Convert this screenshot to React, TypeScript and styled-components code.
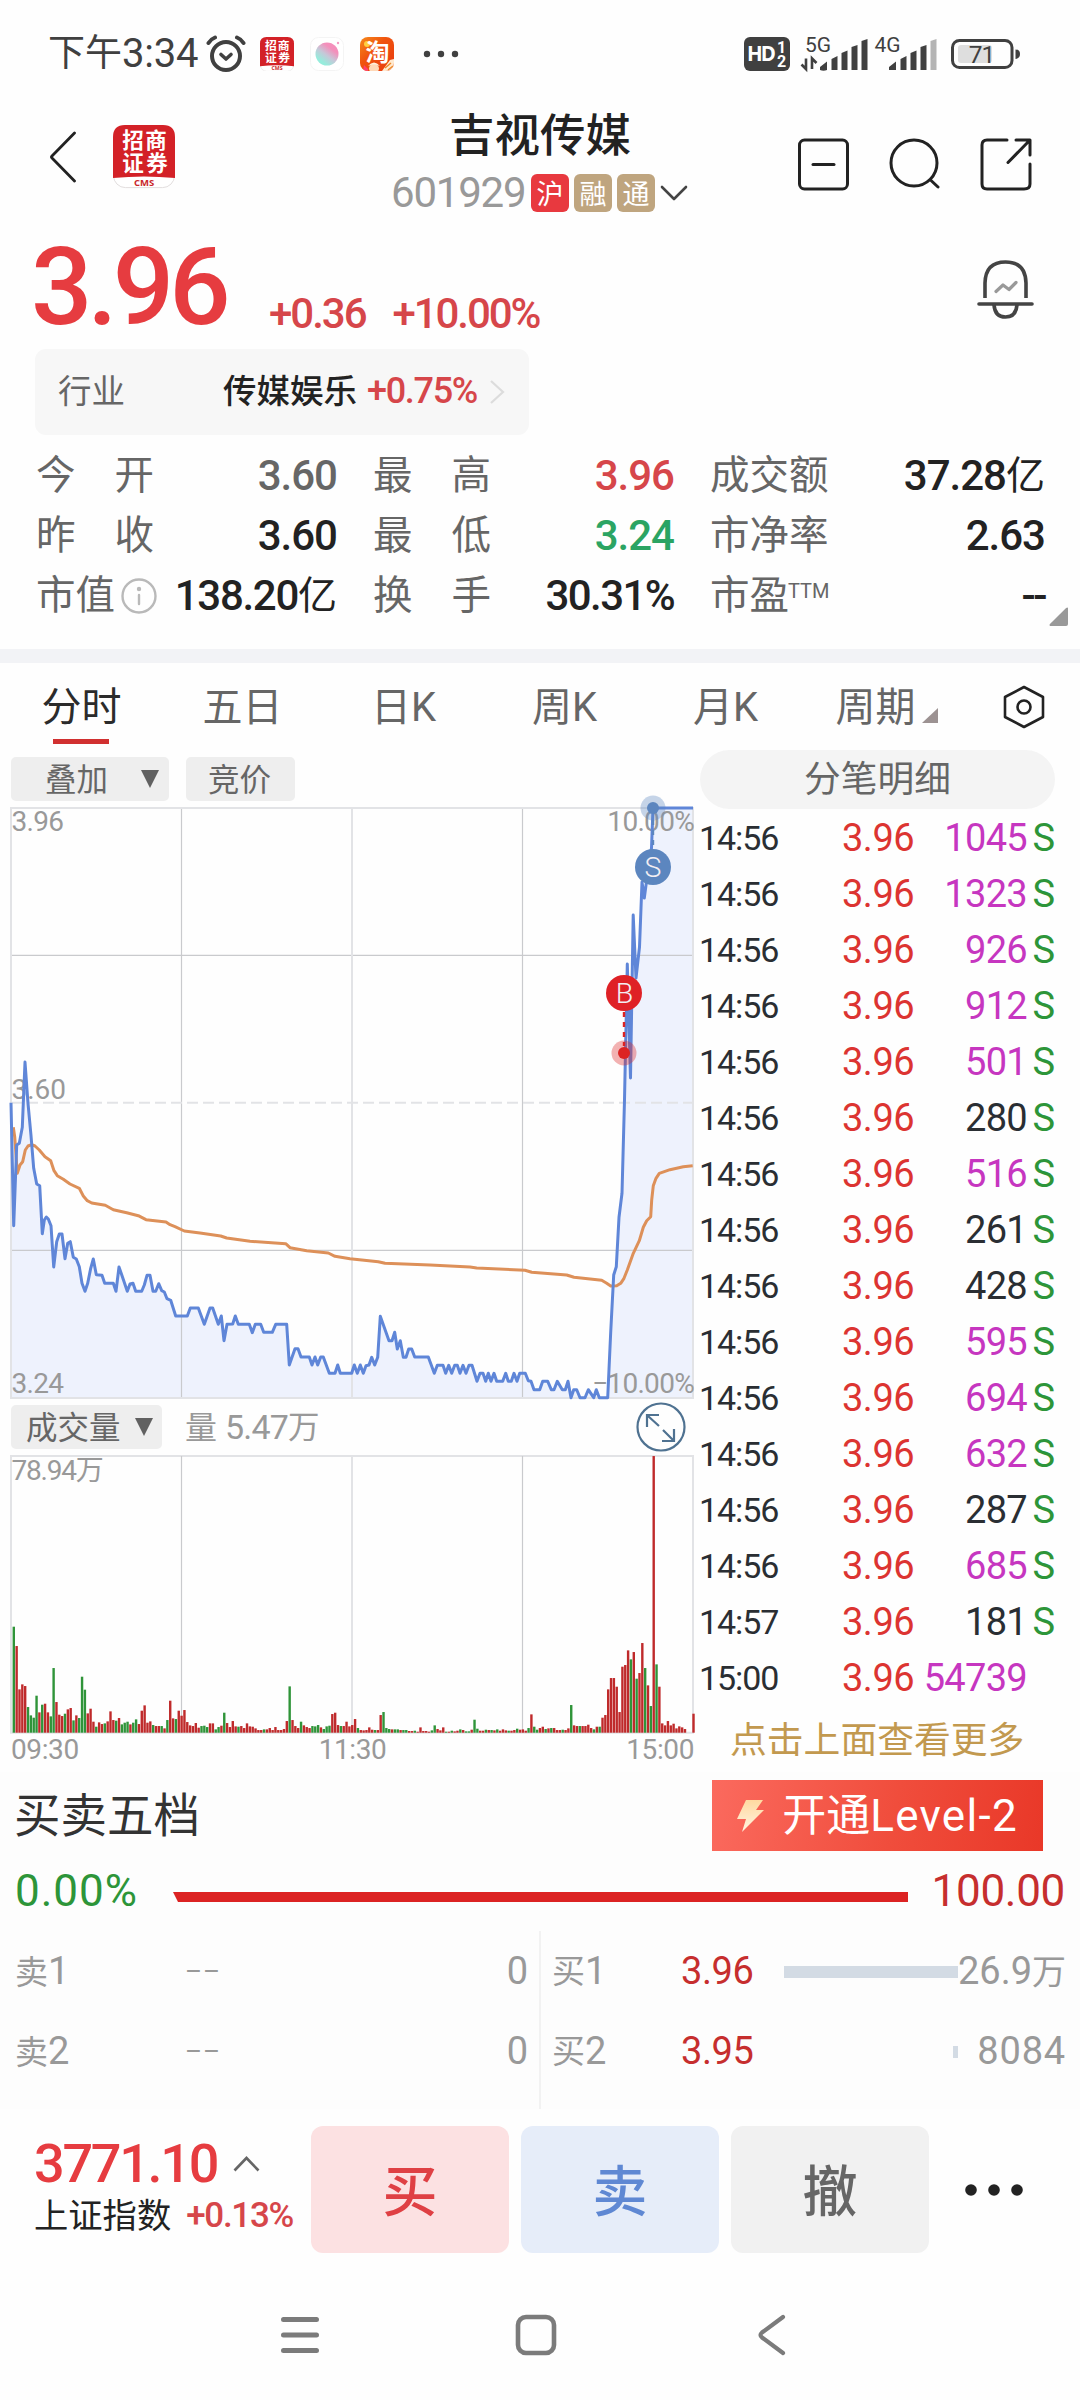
import React from "react";
import styled, { createGlobalStyle } from "styled-components";

const FONT = `Roboto, "Noto Sans CJK SC", sans-serif`;
const CJK = `"Noto Sans CJK SC", sans-serif`;

const C = {
  ink: "#222222",
  grey: "#666666",
  light: "#999999",
  red: "#e63c40",
  quoteRed: "#d6464a",
  tradeRed: "#dc3431",
  bookRed: "#c62e2e",
  green: "#2ba463",
  tradeGreen: "#2d9539",
  violet: "#c636c0",
  blue: "#5f86d2",
  gold: "#c2994f",
};

const GlobalStyle = createGlobalStyle`
  * { box-sizing: border-box; }
  html, body { margin: 0; padding: 0; background: #fefefe; }
  body { font-family: ${FONT}; color: ${C.ink}; }
  svg { display: block; flex: none; }
`;

const Screen = styled.div`
  width: 1080px;
  height: 2400px;
  overflow: hidden;
  display: flex;
  flex-direction: column;
  background: #fefefe;
  line-height: 1;
  white-space: nowrap;
`;

/* ---------- generic text ---------- */
const Num = styled.span<{ $size: number; $color?: string; $weight?: number; $ls?: number }>`
  font-size: ${(p) => p.$size}px;
  line-height: 1.2;
  color: ${(p) => p.$color ?? "inherit"};
  font-weight: ${(p) => p.$weight ?? 400};
  letter-spacing: ${(p) => p.$ls ?? 0}px;
`;
const Zh = styled(Num)`
  padding-top: 1px;
`;

/* ---------- status bar ---------- */
const StatusBar = styled.div`
  height: 108px;
  display: flex;
  align-items: center;
  justify-content: space-between;
  padding: 0 57px 0 48px;
  color: #404040;
`;
const StatusSide = styled.div`
  display: flex;
  align-items: center;
`;
const Clock = styled.div`
  display: flex;
  align-items: center;
  width: 158px;
`;
const AppIcons = styled.div`
  display: flex;
  gap: 16px;
  margin-left: 14px;
  margin-right: 29px;
`;

const BrokerLogo = ({ size }: { size: number }) => (
  <svg width={size} height={size * 1.02} viewBox="0 0 62 63">
    <rect x="0.5" y="0.5" width="61" height="62" rx="12" fill="#fff" stroke="#e2dede" />
    <path d="M0 53V12Q0 0 12 0H50Q62 0 62 12V53Q31 50 0 53Z" fill="#d32127" />
    <g fill="#fff" fontFamily={CJK} fontWeight="700" fontSize="21.5" textAnchor="middle">
      <text x="20" y="23">招</text>
      <text x="43" y="23">商</text>
      <text x="20" y="46">证</text>
      <text x="44" y="46">券</text>
    </g>
    <text x="31" y="61" fill="#c9272b" fontFamily="Open Sans, sans-serif" fontWeight="700" fontSize="9.5" textAnchor="middle">CMS</text>
  </svg>
);

const AlarmIcon = () => (
  <svg width="40" height="38" viewBox="0 0 40 38" fill="none" stroke="#404040" strokeLinecap="round">
    <circle cx="20" cy="21" r="14" strokeWidth="4" />
    <path d="M2.500 8Q5 4 9 2.500M37.500 8Q35 4 31 2.500" strokeWidth="4" />
    <path d="M15 19.500L20 24L25 19.500" strokeWidth="3.600" strokeLinejoin="round" />
  </svg>
);

const BubbleIcon = () => (
  <svg width="34" height="34" viewBox="0 0 34 34">
    <defs>
      <linearGradient id="bubble" x1="0.8" y1="0.1" x2="0.2" y2="0.9">
        <stop offset="0.2" stopColor="#f48fbb" />
        <stop offset="0.55" stopColor="#c6c8d8" />
        <stop offset="0.9" stopColor="#96ecdc" />
      </linearGradient>
    </defs>
    <rect x="0.5" y="0.5" width="33" height="33" rx="8" fill="#fff" stroke="#f4f4f4" />
    <circle cx="17" cy="17" r="11.500" fill="url(#bubble)" />
    <circle cx="28" cy="6" r="1.200" fill="#f29cc3" />
  </svg>
);

const TaoIcon = () => (
  <svg width="34" height="34" viewBox="0 0 34 34">
    <defs>
      <linearGradient id="tao" x1="0" y1="0" x2="1" y2="1">
        <stop offset="0" stopColor="#f58a1c" />
        <stop offset="0.4" stopColor="#f0540f" />
        <stop offset="1" stopColor="#e8380f" />
      </linearGradient>
      <clipPath id="taoClip"><rect width="34" height="34" rx="8" /></clipPath>
    </defs>
    <g clipPath="url(#taoClip)">
      <rect width="34" height="34" fill="url(#tao)" />
      <circle cx="7" cy="7" r="3" fill="#ffcf3e" />
      <ellipse cx="14" cy="31.500" rx="5" ry="4.500" fill="#ffd9b8" />
      <path d="M8 29Q14 22 20 29Q14 26 8 29Z" fill="#fff1dc" />
      <path d="M3 34L4 28L8 32V34Z" fill="#ff3f6e" />
      <path d="M22 34L30 23L34 22V34Z" fill="#ffe9cf" />
      <path d="M25 31L31 26M28 33L33 29" stroke="#ed8a2b" strokeWidth="1.500" />
    </g>
    <text x="17.500" y="24" fill="#fff" fontFamily={CJK} fontWeight="700" fontSize="24" textAnchor="middle">淘</text>
  </svg>
);

const StatusDots = () => (
  <svg width="36" height="8" viewBox="0 0 36 8" fill="#404040">
    <circle cx="4" cy="4" r="3.200" /><circle cx="18" cy="4" r="3.200" /><circle cx="32" cy="4" r="3.200" />
  </svg>
);

const RadioIcons = () => (
  <svg width="280" height="40" viewBox="743 34 280 40" fill="#404040" fontFamily={FONT}>
    <rect x="744" y="37" width="46" height="34" rx="6" />
    <text x="747" y="61" fill="#fff" fontFamily="Open Sans, sans-serif" fontWeight="700" fontSize="20.500" textLength="29">HD</text>
    <text x="777" y="52.500" fill="#fff" fontWeight="700" fontSize="16">1</text>
    <text x="777" y="67" fill="#fff" fontWeight="700" fontSize="16">2</text>
    <text x="805" y="52" fontSize="21" textLength="26">5G</text>
    <path d="M806 58.500V69L801.500 64.500M812 69V58.500L816.500 63" stroke="#404040" strokeWidth="2.600" fill="none" />
    <path d="M820 70V67L827 61.500V70Q823.500 71.500 820 70ZM831.500 70V59L837.500 56V70ZM841.500 70V53L847.500 50.500V70ZM851.500 70V47L857.500 45V70ZM861.500 70V41L867.500 39V70Z" />
    <text x="874.500" y="52" fontSize="21" textLength="26">4G</text>
    <path d="M889 70V67L896 61.500V70ZM900.500 70V59L906.500 56V70ZM910.500 70V53L916.500 50.500V70ZM920.500 70V47L926.500 45V70Z" />
    <path d="M930.500 70V41L936.500 39V70Z" fill="#b4b4b4" />
    <rect x="952.500" y="40.500" width="59.500" height="27" rx="7" fill="none" stroke="#404040" strokeWidth="3" />
    <rect x="958" y="45" width="34" height="18" rx="3" fill="#dedede" />
    <path d="M1015.500 49.500Q1020 49.500 1020 54T1015.500 59Z" />
    <text x="981.500" y="63" fontSize="24.500" textAnchor="middle" letterSpacing="-1">71</text>
  </svg>
);

/* ---------- title bar ---------- */
const TitleBar = styled.header`
  height: 112px;
  display: grid;
  grid-template-columns: 1fr auto 1fr;
`;
const TitleLeft = styled.div`
  display: flex;
  align-items: center;
  gap: 37px;
  height: 98px;
  padding-left: 49px;
`;
const TitleCenter = styled.div`
  display: flex;
  flex-direction: column;
  align-items: center;
`;
const StockName = styled.h1`
  margin: 0;
  height: 56px;
  line-height: 58px;
  font-size: 45.5px;
  font-weight: 500;
  color: ${C.ink};
`;
const CodeRow = styled.div`
  height: 58px;
  width: 298px;
  display: flex;
  align-items: center;
`;
const Code = styled.span`
  width: 140px;
  font-size: 42px;
  line-height: 1.2;
  letter-spacing: -1.2px;
  color: ${C.light};
`;
const MarketTag = styled.span<{ $bg: string }>`
  width: 38px;
  height: 38px;
  margin-right: 5px;
  border-radius: 6px;
  background: ${(p) => p.$bg};
  color: #fff;
  font: 400 27px/37px ${CJK};
  text-align: center;
`;
const TitleRight = styled.div`
  display: flex;
  align-items: center;
  justify-content: flex-end;
  gap: 40px;
  height: 112px;
  padding-right: 48px;
`;

/* ---------- quote ---------- */
const QuoteRow = styled.section`
  height: 129px;
  display: flex;
  align-items: flex-start;
  padding: 0 45px 0 31px;
`;
const Price = styled.div`
  width: 238px;
  height: 129px;
  font-size: 108px;
  line-height: 134px;
  font-weight: 500;
  letter-spacing: -4.8px;
  color: ${C.red};
`;
const Changes = styled.div`
  flex: 1;
  display: flex;
  gap: 27px;
  padding-top: 69px;
`;
const BellSlot = styled.div`
  padding-top: 38px;
`;

const Industry = styled.section`
  width: 494px;
  height: 86px;
  margin-left: 35px;
  padding: 0 23px;
  display: flex;
  align-items: center;
  border-radius: 11px;
  background: #f7f7f7;
`;
const IndustryName = styled.span`
  width: 140px;
  margin-left: 98px;
  margin-right: 10px;
  padding-top: 1px;
  font-size: 33.5px;
  font-weight: 500;
  line-height: 1.2;
`;

const Stats = styled.section`
  position: relative;
  height: 214px;
  padding: 11px 35px 0 36px;
  display: grid;
  grid-template-columns: 301px 301px 335px;
  grid-auto-rows: 60px;
  column-gap: 36px;
`;
const Stat = styled.div`
  display: flex;
  align-items: center;
  justify-content: space-between;
`;
const StatLabel = styled.div`
  min-width: 118px;
  height: 44px;
  display: flex;
  align-items: center;
  justify-content: space-between;
  color: ${C.grey};
  font-size: 39.5px;
`;
const StatValue = styled.span<{ $color?: string; $ls?: number }>`
  display: flex;
  align-items: center;
  font-size: 42px;
  font-weight: 500;
  letter-spacing: ${(p) => p.$ls ?? -1}px;
  color: ${(p) => p.$color ?? C.ink};
`;
const Unit = styled.span`
  font-size: 39px;
  font-weight: 400;
  letter-spacing: 0;
`;
const Super = styled.sup`
  align-self: flex-start;
  margin: 7px 0 0 -1px;
  font-size: 20px;
  line-height: 1;
`;
const StatsCorner = styled.div`
  position: absolute;
  right: 12px;
  top: 172px;
`;

const Band = styled.div`
  height: 14px;
  background: #f2f3f6;
`;

/* ---------- tabs ---------- */
const Tabs = styled.nav`
  height: 87px;
  padding-left: 1px;
  display: flex;
`;
const Tab = styled.div<{ $active?: boolean }>`
  position: relative;
  width: 161px;
  height: 87px;
  padding-top: 3px;
  display: flex;
  align-items: center;
  justify-content: center;
  font-size: 40px;
  color: ${(p) => (p.$active ? "#2b2b2b" : C.grey)};
  &::after {
    content: "";
    display: ${(p) => (p.$active ? "block" : "none")};
    position: absolute;
    left: 52px;
    bottom: 6px;
    width: 56px;
    height: 5px;
    background: #d13030;
  }
`;
const HexSlot = styled.div`
  flex: 1;
  display: flex;
  align-items: center;
  justify-content: center;
`;

/* ---------- chart and ticks ---------- */
const Body = styled.main`
  height: 1022px;
  display: grid;
  grid-template-columns: 700px 380px;
`;
const ChartColumn = styled.div`
  display: flex;
  flex-direction: column;
`;
const ChartTools = styled.div`
  height: 51px;
  padding: 7px 0 0 11px;
  display: flex;
  gap: 17px;
`;
const VolumeTools = styled.div`
  height: 52px;
  padding: 0 14px 0 11px;
  display: flex;
  align-items: center;
`;
const Chip = styled.div<{ $w: number; $pad: string }>`
  width: ${(p) => p.$w}px;
  height: 44px;
  padding: ${(p) => p.$pad};
  display: flex;
  align-items: center;
  justify-content: space-between;
  border-radius: 5px;
  background: #eeeeee;
  color: ${C.grey};
  font-size: 31.5px;
`;
const ChipText = styled.span`
  padding-top: 3px;
  line-height: 1.2;
`;
const VolumeText = styled.div`
  flex: 1;
  margin-left: 23px;
  padding-top: 1px;
  display: flex;
  align-items: center;
  color: ${C.light};
`;
const Axis = styled.div`
  height: 25px;
  width: 683px;
  margin-left: 11px;
  display: flex;
  align-items: center;
  justify-content: space-between;
  font-size: 28px;
  letter-spacing: -0.4px;
  color: ${C.light};
`;

const TickColumn = styled.aside`
  display: flex;
  flex-direction: column;
`;
const TickTitle = styled.div`
  width: 355px;
  height: 59px;
  margin-bottom: 1px;
  border-radius: 30px;
  background: #f4f4f4;
  color: ${C.grey};
  font-size: 36.7px;
  line-height: 60px;
  text-align: center;
`;
const Tick = styled.div`
  height: 56px;
  width: 355px;
  display: grid;
  grid-template-columns: 142px 72px 113px 28px;
  align-items: center;
`;
const TickTime = styled.span`
  margin-left: -1px;
  font-size: 34px;
  letter-spacing: -1.1px;
  color: #2a2e33;
`;
const TickPrice = styled.span`
  font-size: 38px;
  letter-spacing: -0.5px;
  color: ${C.tradeRed};
`;
const TickVolume = styled.span<{ $big: boolean }>`
  font-size: 38px;
  letter-spacing: -0.7px;
  text-align: right;
  justify-self: end;
  color: ${(p) => (p.$big ? C.violet : "#2a2e33")};
`;
const TickSide = styled.span`
  font-size: 38px;
  text-align: right;
  color: ${C.tradeGreen};
`;
const More = styled.div`
  height: 66px;
  padding-left: 30px;
  font-size: 36.8px;
  line-height: 69px;
  color: ${C.gold};
`;

/* ---------- order book ---------- */
const Book = styled.section`
  height: 337px;
  padding-top: 8px;
  background: #fdfdfd;
`;
const BookHead = styled.div`
  height: 71px;
  padding: 0 37px 0 14px;
  display: flex;
  align-items: center;
  justify-content: space-between;
`;
const BookTitle = styled.h2`
  margin: 0;
  padding-top: 3px;
  font-size: 46.5px;
  font-weight: 400;
  line-height: 1.2;
  color: #333;
`;
const LevelButton = styled.div`
  width: 331px;
  height: 71px;
  padding: 0 25px;
  display: flex;
  align-items: center;
  justify-content: space-between;
  background: linear-gradient(100deg, #fb6a5e, #f04d3c 55%, #e93828);
  color: #fff;
`;
const LevelText = styled.span`
  padding-top: 2px;
  font-size: 44px;
  line-height: 1.2;
`;
const LevelLatin = styled.span`
  letter-spacing: 1.3px;
`;
const Ratio = styled.div`
  height: 80px;
  padding: 0 15px 0 15px;
  display: grid;
  grid-template-columns: 158px 735px 1fr;
  align-items: center;
`;
const RatioBar = styled.div`
  height: 10px;
  margin-top: 12px;
  background: #dc2323;
  clip-path: polygon(0 0, 100% 0, 100% 100%, 5px 100%);
`;
const RatioEnd = styled.div`
  text-align: right;
`;
const BookSides = styled.div`
  height: 178px;
  display: grid;
  grid-template-columns: 539px 541px;
`;
const BookSide = styled.div<{ $ruled?: boolean }>`
  border-left: ${(p) => (p.$ruled ? "2px solid #f2f2f2" : "none")};
`;
const SellRow = styled.div`
  height: 80px;
  padding: 2px 11px 0 15px;
  display: grid;
  grid-template-columns: 170px 1fr auto;
  align-items: center;
  color: ${C.light};
`;
const BuyRow = styled.div`
  height: 80px;
  padding: 1px 14px 0 11px;
  display: grid;
  grid-template-columns: 129px 103px 174px 1fr;
  align-items: center;
  color: ${C.light};
`;
const DepthBar = styled.div<{ $w: number }>`
  justify-self: end;
  width: ${(p) => p.$w}px;
  height: 12px;
  background: #d3dbe4;
`;
const BuyVolume = styled.div`
  justify-self: end;
  display: flex;
  align-items: center;
`;
const Label = styled.span`
  display: flex;
  align-items: center;
`;

/* ---------- bottom ---------- */
const TradeBar = styled.footer`
  height: 144px;
  padding: 17px 0 0 34px;
  display: flex;
`;
const IndexBlock = styled.div`
  width: 277px;
  display: flex;
  flex-direction: column;
`;
const IndexTop = styled.div`
  height: 74px;
  padding-top: 2px;
  display: flex;
  align-items: center;
  gap: 16px;
`;
const IndexBottom = styled.div`
  height: 32px;
  display: flex;
  align-items: center;
  gap: 15px;
`;
const TradeButton = styled.div<{ $bg: string; $color: string }>`
  width: 198px;
  height: 127px;
  margin-right: 12px;
  border-radius: 12px;
  background: ${(p) => p.$bg};
  color: ${(p) => p.$color};
  font-size: 55px;
  font-weight: 500;
  line-height: 133px;
  text-align: center;
`;
const DotsSlot = styled.div`
  padding: 57px 0 0 23px;
`;
const SystemNav = styled.div`
  height: 147px;
  padding: 61px 0 0 280px;
  display: flex;
  gap: 195px;
`;

/* ---------- data ---------- */
type P = [number, number];
const scaled = (pts: P[], ox: number, oy: number): P[] => pts.map(([x, y]) => [ox + x / 3, oy + y / 3]);

const PRICE: P[] = [
  ...scaled(
    [[33,188],[41,557],[50,315],[58,310],[67,262],[75,66],[84,190],[93,287],[101,385],[110,432],[119,437],[127,581],[133,540],[139,531],[145,537],[153,557],[161,681],[170,605],[178,582],[186,582],[195,656],[203,610],[211,605],[220,652],[229,657],[238,680],[246,730],[255,754],[263,730],[272,685],[280,657],[289,704],[306,706],[314,730],[340,730],[348,754],[357,681],[365,704],[382,754],[390,732],[399,730],[407,754],[425,754],[433,735],[441,706],[450,706],[459,754],[467,754],[476,731],[485,752],[493,756],[501,776],[512,781],[527,828],[562,828],[571,804],[595,804],[613,853],[630,804],[638,804],[655,853],[664,828],[672,902],[681,853],[698,852],[706,828],[715,853],[748,853],[757,878],[766,853],[782,853],[791,877],[817,877],[827,853],[860,853],[868,975],[885,926],[894,926],[903,951],[928,951],[936,975],[945,951],[953,975],[962,951],[970,951],[988,1000],[1005,1000],[1013,975],[1021,1000],[1055,1000]],
    0, 1040),
  ...scaled(
    [[13,675],[22,700],[31,675],[40,700],[48,677],[57,675],[65,652],[74,675],[83,652],[91,529],[117,602],[126,602],[134,577],[142,627],[151,602],[160,652],[168,652],[176,627],[185,627],[194,651],[235,651],[253,700],[262,676],[279,676],[287,700],[296,676],[305,700],[314,676],[322,676],[330,700],[339,676],[348,700],[357,676],[366,676],[381,724],[390,700],[399,700],[407,724],[415,700],[423,724],[432,700],[440,724],[458,724],[467,700],[475,724],[484,724],[492,700],[501,724],[509,700],[526,700],[535,722],[543,724],[552,749],[569,749],[578,724],[593,724],[604,749],[612,749],[622,724],[637,749],[646,749],[654,724],[663,773],[671,749],[680,749],[690,773],[705,773],[715,749],[731,773],[739,749],[748,773],[773,773],[782,577],[791,405],[799,380],[807,232],[816,160]],
    350, 1140),
  [624.5, 1100], [627.3, 964], [630.5, 1078], [633.2, 915], [636, 978], [639.5, 947], [642, 882], [644.3, 898], [648, 870], [651.5, 848], [653, 808], [693, 808],
];

const AVERAGE: P[] = [
  ...scaled(
    [[40,262],[44,290],[52,400],[60,375],[68,365],[76,330],[84,318],[95,314],[105,318],[118,330],[135,350],[152,362],[162,392],[172,407],[190,418],[210,432],[238,445],[250,468],[262,482],[275,489],[316,496],[340,509],[380,518],[415,527],[438,539],[498,546],[510,554],[525,560],[553,573],[600,579],[662,588],[680,594],[750,604],[857,611],[870,623],[920,632],[985,639],[1005,649]],
    0, 1040),
  ...scaled(
    [[0,356],[85,365],[105,370],[240,375],[360,381],[380,384],[525,391],[545,397],[650,405],[672,412],[755,421],[770,430],[782,438],[800,437],[812,430],[822,415],[832,390],[850,340],[868,302],[880,262],[890,242],[902,230],[905,180],[910,137],[918,115],[928,100],[960,89],[1000,80],[1028,77]],
    350, 1140),
];

const toPath = (pts: P[]) => pts.map(([x, y], i) => `${i ? "L" : "M"}${x.toFixed(1)} ${y.toFixed(1)}`).join("");

const VOLUME = (
  "g318 r260 r130 r145 r140 g77 g52 g45 g111 r61 g84 r87 r61 g49 g194 r92 r54 r50 g57 r70 r74 g37 r52 g44 g168 g129 r58 r72 r33 g18 " +
  "r31 r26 g28 r34 r64 r38 g36 r44 g25 g30 g33 r25 g30 g40 r26 r66 r82 r30 r34 g23 r20 r20 g20 r13 g38 r96 r43 g41 r66 r51 " +
  "r68 r32 r22 r20 r29 r15 g20 g21 g17 r28 r28 g10 g17 r21 g60 r29 r17 r35 r19 g18 r20 r14 r28 r19 r18 r13 r8 r8 g10 r10 " +
  "r14 r8 r17 r8 r8 r11 r35 g139 r38 r20 r14 g33 r22 r17 r14 g20 g19 g23 r16 g11 g19 g21 r56 r60 r23 g20 r20 r33 r19 r23 " +
  "r41 g14 r8 r7 r8 r16 r9 g8 r8 r53 g62 g14 g11 r10 g10 g10 r8 g8 g8 r5 r5 g6 r3 r16 r5 r5 r3 g7 g22 r11 " +
  "r7 r16 g3 r3 g6 r4 r6 g10 r8 g4 g4 r9 g39 g12 r6 r6 g9 r8 g8 r7 g10 r6 r10 r7 g6 r6 r8 g12 r9 r10 " +
  "r6 g14 r55 g18 g9 r14 r18 g11 r13 g14 r14 r8 r8 g9 r8 r13 g83 r22 r20 g20 r20 r20 r24 r14 g10 r18 g18 r45 r53 r130 " +
  "r164 r164 r138 r62 r198 r203 r247 g220 r242 g162 r179 r269 g194 r142 g80 r830 g205 r138 r28 r22 r35 r22 r27 r13 r19 r16 r11 r0 r0 r57"
).split(" ");

const TICKS: [string, string, string, boolean][] = [
  ["14:56", "1045", "S", true], ["14:56", "1323", "S", true], ["14:56", "926", "S", true], ["14:56", "912", "S", true],
  ["14:56", "501", "S", true], ["14:56", "280", "S", false], ["14:56", "516", "S", true], ["14:56", "261", "S", false],
  ["14:56", "428", "S", false], ["14:56", "595", "S", true], ["14:56", "694", "S", true], ["14:56", "632", "S", true],
  ["14:56", "287", "S", false], ["14:56", "685", "S", true], ["14:57", "181", "S", false], ["15:00", "54739", "", true],
];

/* ---------- charts ---------- */
const PriceChart = () => {
  const line = toPath(PRICE);
  return (
    <svg width="700" height="600" viewBox="0 801 700 600" overflow="visible" fontFamily={FONT} fontSize="28">
      <path d={`${line}V1398H11Z`} fill="#eef2fd" />
      <g fill="none" strokeWidth="1.200" stroke="#c9cacd">
        <path d="M11 955.300H693M11 1250.300H693M181.500 808V1398M522.500 808V1398" />
      </g>
      <g fill="none" strokeWidth="2" stroke="#e2e3e6">
        <rect x="11" y="808" width="682" height="590" />
        <path d="M352 808V1398" />
        <path d="M11 1102.700H693" strokeDasharray="11 5" />
      </g>
      <g fill={C.light} letterSpacing="-0.7">
        <text x="11.500" y="831">3.96</text>
        <text x="694" y="831" textAnchor="end">10.00%</text>
        <text x="11.500" y="1099" letterSpacing="0">3.60</text>
        <text x="11.500" y="1393">3.24</text>
        <text x="694" y="1393" textAnchor="end">−10.00%</text>
      </g>
      <path d={toPath(AVERAGE)} fill="none" stroke="#dd9059" strokeWidth="3" strokeLinejoin="round" />
      <path d={line} fill="none" stroke="#5f86d8" strokeWidth="3" strokeLinejoin="round" />
      <path d="M624 1012V1046" stroke="#dc2323" strokeWidth="2.400" strokeDasharray="5 5" />
      <circle cx="624" cy="1053" r="12.500" fill="#dc2323" opacity="0.35" />
      <circle cx="624" cy="1053" r="6" fill="#dc2323" />
      <circle cx="624" cy="993" r="18" fill="#df2126" />
      <path d="M653 820V850" stroke="#5c86bf" strokeWidth="2.400" strokeDasharray="5 5" />
      <circle cx="653" cy="808" r="12.500" fill="#5c86bf" opacity="0.35" />
      <circle cx="653" cy="808" r="6" fill="#5c86bf" />
      <circle cx="653" cy="867" r="18" fill="#5c86bf" />
      <g fill="#f3eef2" fontSize="28.500" fontWeight="300" textAnchor="middle">
        <text x="624.500" y="1003">B</text>
        <text x="653" y="877">S</text>
      </g>
    </svg>
  );
};

const VolumeChart = () => (
  <svg width="700" height="284" viewBox="0 1453 700 284" fontFamily={FONT} fontSize="28">
    <g fill="none" stroke="#e2e3e6" strokeWidth="2">
      <rect x="11" y="1456" width="682" height="276.700" />
      <path d="M352 1456V1733" />
      <path d="M181.500 1456V1733M522.500 1456V1733" stroke="#c9cacd" strokeWidth="1.200" />
    </g>
    <text x="11.500" y="1479.500" fill={C.light} letterSpacing="-1.200">78.94万</text>
    {VOLUME.map((v, i) => {
      const h = Number(v.slice(1)) / 3;
      return <rect key={i} x={12.6 + i * 2.844} y={1732.7 - h} width="2.400" height={h} fill={v[0] === "r" ? "#bf2a2b" : "#2f9439"} />;
    })}
  </svg>
);

/* ---------- small icons ---------- */
const Down = () => (
  <svg width="18" height="18" viewBox="0 0 18 18"><path d="M0 0H18L9 18Z" fill="#616161" /></svg>
);
const Corner = ({ size, color }: { size: number; color: string }) => (
  <svg width={size} height={size} viewBox="0 0 20 20"><path d="M20 1V18Q20 20 18 20H1Q0 19 1 18L18 1Q20 0 20 1Z" fill={color} /></svg>
);

export default function App() {
  return (
    <Screen>
      <GlobalStyle />
      <StatusBar>
        <StatusSide>
          <Clock>
            <Zh $size={37}>下午</Zh>
            <Num $size={40} $ls={-0.2}>3:34</Num>
          </Clock>
          <AlarmIcon />
          <AppIcons>
            <BrokerLogo size={34} />
            <BubbleIcon />
            <TaoIcon />
          </AppIcons>
          <StatusDots />
        </StatusSide>
        <RadioIcons />
      </StatusBar>

      <TitleBar>
        <TitleLeft>
          <svg width="27" height="52" viewBox="0 0 27 52" fill="none" stroke={C.ink} strokeWidth="2.800" strokeLinecap="round" strokeLinejoin="round">
            <path d="M25.500 2L3 25Q2 26 3 27L25.500 50" />
          </svg>
          <BrokerLogo size={62} />
        </TitleLeft>
        <TitleCenter>
          <StockName>吉视传媒</StockName>
          <CodeRow>
            <Code>601929</Code>
            <MarketTag $bg="#e8393f">沪</MarketTag>
            <MarketTag $bg="#bfa57f">融</MarketTag>
            <MarketTag $bg="#bfa57f">通</MarketTag>
            <svg width="28" height="16" viewBox="0 0 28 16" fill="none" stroke="#444" strokeWidth="2.600" strokeLinecap="round" strokeLinejoin="round">
              <path d="M2 2L14 14L26 2" />
            </svg>
          </CodeRow>
        </TitleCenter>
        <TitleRight>
          <svg width="51" height="53" viewBox="0 0 51 53" fill="none" stroke={C.ink} strokeWidth="3" strokeLinecap="round">
            <rect x="1.500" y="2" width="48" height="49" rx="5" />
            <path d="M15 26.500H36" />
          </svg>
          <svg width="51" height="53" viewBox="0 0 51 53" fill="none" stroke={C.ink} strokeWidth="3" strokeLinecap="round">
            <circle cx="25" cy="25" r="23" />
            <path d="M41.500 42L49 49" />
          </svg>
          <svg width="52" height="53" viewBox="0 0 52 53" fill="none" stroke={C.ink} strokeWidth="3" strokeLinecap="round" strokeLinejoin="round">
            <path d="M27 2H7Q2 2 2 7V46Q2 51 7 51H44Q50 51 50 46V26M36 2H50V17M49 3L28 24.500" />
          </svg>
        </TitleRight>
      </TitleBar>

      <QuoteRow>
        <Price>3.96</Price>
        <Changes>
          <Num $size={42} $color={C.quoteRed} $weight={500} $ls={-2}>+0.36</Num>
          <Num $size={42} $color={C.quoteRed} $weight={500} $ls={-2.1}>+10.00%</Num>
        </Changes>
        <BellSlot>
          <svg width="60" height="62" viewBox="0 0 60 62" fill="none" stroke="#444" strokeWidth="3.600" strokeLinecap="round">
            <path d="M10 40V25Q10.500 4 30.500 4Q50.500 4 51 25V40" strokeLinecap="butt" />
            <path d="M4 46H57" />
            <path d="M19 47Q20 59 30.500 59T42 47" />
            <path d="M21 33.500L28 27L34 31.500L41 24.500" stroke="#999" strokeWidth="3.200" strokeLinejoin="round" />
          </svg>
        </BellSlot>
      </QuoteRow>

      <Industry>
        <Zh $size={33.5} $color={C.grey}>行业</Zh>
        <IndustryName>传媒娱乐</IndustryName>
        <Num $size={36} $color={C.quoteRed} $weight={500} $ls={-1.3}>+0.75%</Num>
        <svg width="34" height="24" viewBox="0 0 34 24" fill="none" stroke="#dcdcdc" strokeWidth="2.200">
          <path d="M14 1L26 12L14 23" />
        </svg>
      </Industry>

      <Stats>
        <Stat><StatLabel><span>今</span><span>开</span></StatLabel><StatValue $color={C.grey}>3.60</StatValue></Stat>
        <Stat><StatLabel><span>最</span><span>高</span></StatLabel><StatValue $color={C.quoteRed}>3.96</StatValue></Stat>
        <Stat><StatLabel>成交额</StatLabel><StatValue>37.28<Unit>亿</Unit></StatValue></Stat>
        <Stat><StatLabel><span>昨</span><span>收</span></StatLabel><StatValue>3.60</StatValue></Stat>
        <Stat><StatLabel><span>最</span><span>低</span></StatLabel><StatValue $color={C.green}>3.24</StatValue></Stat>
        <Stat><StatLabel>市净率</StatLabel><StatValue>2.63</StatValue></Stat>
        <Stat>
          <StatLabel>
            <span>市值</span>
            <svg width="43" height="38" viewBox="-6 0 43 38" fill="none" stroke="#b9b9b9" strokeWidth="2.400" strokeLinecap="round">
              <circle cx="18" cy="19" r="16.500" />
              <path d="M18 18V27" />
              <circle cx="18" cy="12" r="1" fill="#b9b9b9" />
            </svg>
          </StatLabel>
          <StatValue $ls={-1.3}>138.20<Unit>亿</Unit></StatValue>
        </Stat>
        <Stat><StatLabel><span>换</span><span>手</span></StatLabel><StatValue $ls={-1.6}>30.31%</StatValue></Stat>
        <Stat><StatLabel><span>市盈</span><Super>TTM</Super></StatLabel><StatValue $ls={-2.5}>--</StatValue></Stat>
        <StatsCorner><Corner size={19} color="#999" /></StatsCorner>
      </Stats>

      <Band />

      <Tabs>
        <Tab $active>分时</Tab>
        <Tab>五日</Tab>
        <Tab>日K</Tab>
        <Tab>周K</Tab>
        <Tab>月K</Tab>
        <Tab>
          周期
          <svg width="22" height="36" viewBox="0 0 22 36"><path d="M22 18V33H6Z" fill="#9c9292" /></svg>
        </Tab>
        <HexSlot>
          <svg width="42" height="44" viewBox="0 0 42 44" fill="none" stroke={C.ink} strokeWidth="2.600" strokeLinejoin="round">
            <path d="M21 2L40 12V32L21 42L2 32V12Z" />
            <circle cx="21" cy="22" r="6.500" />
          </svg>
        </HexSlot>
      </Tabs>

      <Body>
        <ChartColumn>
          <ChartTools>
            <Chip $w={158} $pad="0 10px 0 34px"><ChipText>叠加</ChipText><Down /></Chip>
            <Chip $w={109} $pad="0 22px"><ChipText>竞价</ChipText></Chip>
          </ChartTools>
          <PriceChart />
          <VolumeTools>
            <Chip $w={151} $pad="0 9px 0 15px"><ChipText>成交量</ChipText><Down /></Chip>
            <VolumeText>
              <Zh $size={32}>量&nbsp;</Zh>
              <Num $size={34} $ls={-0.8}>5.47</Num>
              <Zh $size={31.5}>万</Zh>
            </VolumeText>
            <svg width="50" height="50" viewBox="0 0 50 50" fill="none" stroke="#4f7291" strokeWidth="2.200">
              <circle cx="25" cy="25" r="23.500" />
              <path d="M11 25V13H23M12 14L23 24M38 27V39H26M37 38L27 28" />
            </svg>
          </VolumeTools>
          <VolumeChart />
          <Axis><span>09:30</span><span>11:30</span><span>15:00</span></Axis>
        </ChartColumn>

        <TickColumn>
          <TickTitle>分笔明细</TickTitle>
          {TICKS.map(([time, volume, side, big], i) => (
            <Tick key={i}>
              <TickTime>{time}</TickTime>
              <TickPrice>3.96</TickPrice>
              <TickVolume $big={big}>{volume}</TickVolume>
              <TickSide>{side}</TickSide>
            </Tick>
          ))}
          <More>点击上面查看更多</More>
        </TickColumn>
      </Body>

      <Book>
        <BookHead>
          <BookTitle>买卖五档</BookTitle>
          <LevelButton>
            <svg width="27" height="32" viewBox="0 0 27 32">
              <defs>
                <linearGradient id="bolt" x1="0" y1="0" x2="0" y2="1">
                  <stop offset="0" stopColor="#ffd9a0" />
                  <stop offset="1" stopColor="#fff4e2" />
                </linearGradient>
              </defs>
              <path d="M9 0H26L19 10H27L5 32L9 19H0Z" fill="url(#bolt)" />
            </svg>
            <LevelText>开通<LevelLatin>Level-2</LevelLatin></LevelText>
          </LevelButton>
        </BookHead>
        <Ratio>
          <Num $size={44} $color={C.tradeGreen} $ls={1}>0.00%</Num>
          <RatioBar />
          <RatioEnd><Num $size={44} $color={C.bookRed} $ls={-0.3}>100.00</Num></RatioEnd>
        </Ratio>
        <BookSides>
          <BookSide>
            {["1", "2"].map((n) => (
              <SellRow key={n}>
                <Label><Zh $size={33}>卖</Zh><Num $size={38}>{n}</Num></Label>
                <Num $size={26} $ls={1}>––</Num>
                <Num $size={38}>0</Num>
              </SellRow>
            ))}
          </BookSide>
          <BookSide $ruled>
            <BuyRow>
              <Label><Zh $size={33}>买</Zh><Num $size={38}>1</Num></Label>
              <Num $size={38} $color={C.bookRed} $ls={-0.4}>3.96</Num>
              <DepthBar $w={174} />
              <BuyVolume><Num $size={38}>26.9</Num><Zh $size={34}>万</Zh></BuyVolume>
            </BuyRow>
            <BuyRow>
              <Label><Zh $size={33}>买</Zh><Num $size={38}>2</Num></Label>
              <Num $size={38} $color={C.bookRed} $ls={-0.4}>3.95</Num>
              <DepthBar $w={5} />
              <BuyVolume><Num $size={38} $ls={0.8}>8084</Num></BuyVolume>
            </BuyRow>
          </BookSide>
        </BookSides>
      </Book>

      <TradeBar>
        <IndexBlock>
          <IndexTop>
            <Num $size={54} $color={C.red} $weight={500} $ls={-2.3}>3771.10</Num>
            <svg width="27" height="16" viewBox="0 0 27 16" fill="none" stroke="#666" strokeWidth="2.600"><path d="M1.500 14.500L13.500 2L25.500 14.500" /></svg>
          </IndexTop>
          <IndexBottom>
            <Zh $size={34.3}>上证指数</Zh>
            <Num $size={35} $color={C.quoteRed} $weight={500} $ls={-1.3}>+0.13%</Num>
          </IndexBottom>
        </IndexBlock>
        <TradeButton $bg="#fce1e2" $color="#df4044">买</TradeButton>
        <TradeButton $bg="#e6edf9" $color="#5f88d3">卖</TradeButton>
        <TradeButton $bg="#f1f1f1" $color="#666">撤</TradeButton>
        <DotsSlot>
          <svg width="60" height="14" viewBox="0 0 60 14" fill={C.ink}>
            <circle cx="7" cy="7" r="5.800" /><circle cx="30" cy="7" r="5.800" /><circle cx="53" cy="7" r="5.800" />
          </svg>
        </DotsSlot>
      </TradeBar>

      <SystemNav>
        <svg width="40" height="42" viewBox="0 0 40 42" stroke="#7b7b7b" strokeWidth="5" strokeLinecap="round">
          <path d="M3.500 5.500H36.500M3.500 21H36.500M3.500 36.500H36.500" />
        </svg>
        <svg width="42" height="42" viewBox="0 0 42 42" fill="none" stroke="#7b7b7b" strokeWidth="4.600">
          <rect x="3" y="3" width="36" height="36" rx="8" />
        </svg>
        <svg width="42" height="42" viewBox="0 0 42 42" fill="none" stroke="#7b7b7b" strokeWidth="4.200" strokeLinecap="round">
          <path d="M31 3L10 18.500Q7 21 10 23.500L31 39" />
        </svg>
      </SystemNav>
    </Screen>
  );
}
